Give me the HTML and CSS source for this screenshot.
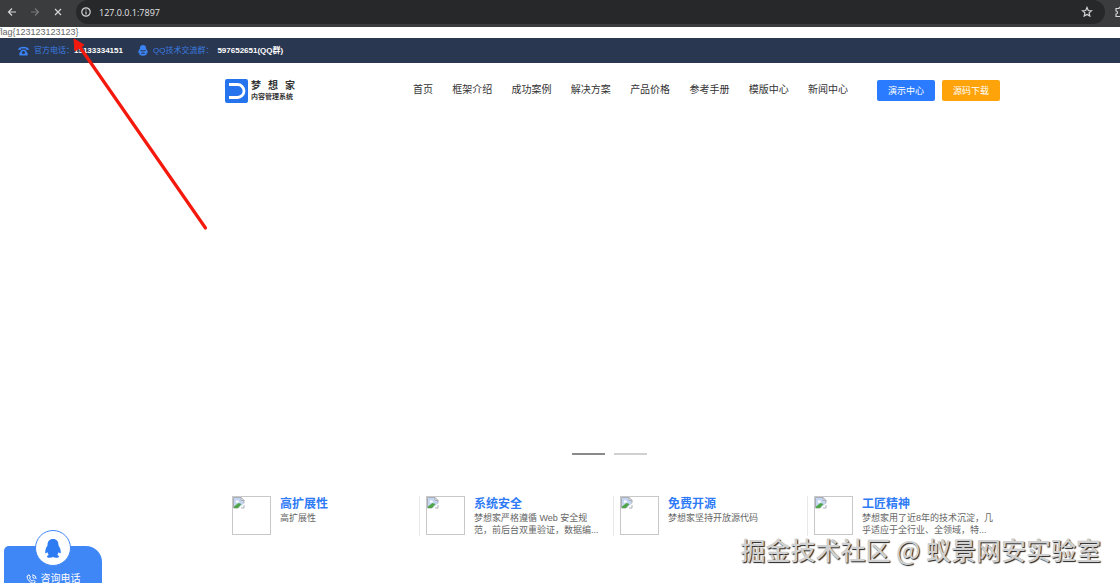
FILE: index.html
```
<!DOCTYPE html>
<html lang="zh-CN">
<head>
    <meta charset="UTF-8">
    <meta name="viewport" content="width=device-width, initial-scale=1.0">
    <title>127.0.0.1:7897</title>
    <link rel="stylesheet" href="styles.css">
</head>
<body>
    <div class="browser">
        <button class="tool" aria-label="后退">
            <svg width="10" height="10" viewBox="0 0 10 10"><path d="M9 5H1.500M5 1.500L1.500 5L5 8.500" /></svg>
        </button>
        <button class="tool dim" aria-label="前进">
            <svg width="10" height="10" viewBox="0 0 10 10"><path d="M1 5h7.500M5 1.500L8.500 5L5 8.500" /></svg>
        </button>
        <button class="tool" aria-label="停止">
            <svg width="10" height="10" viewBox="0 0 10 10"><path d="M2 2l6 6M8 2l-6 6" /></svg>
        </button>
        <div class="address">
            <svg width="10" height="10" viewBox="0 0 10 10"><circle cx="5" cy="5" r="4.200" /><path d="M5 4.500v3M5 2.500v1" /></svg>
            <input class="url" type="text" value="127.0.0.1:7897" aria-label="地址">
            <button class="star" aria-label="收藏">
                <svg width="12" height="12" viewBox="0 0 12 12"><path d="M6 1.500l1.300 3 3.200.3-2.400 2.100.7 3.200L6 8.400l-2.800 1.700.7-3.200L1.500 4.800l3.200-.3z" /></svg>
            </button>
        </div>
        <button class="tool ext" aria-label="扩展程序">
            <svg width="12" height="12" viewBox="0 0 12 12"><path d="M1 2.500h3a1.500 1.500 0 0 1 3 0h3v8H1V8a1.500 1.500 0 0 0 0-3z" /></svg>
        </button>
    </div>

    <div class="flag">flag{123123123123}</div>

    <div class="topbar">
        <svg class="icon-phone" width="11" height="10" viewBox="0 0 12 10">
            <path d="M0 3.500C.5-.8 11.500-.8 12 3.500L9.200 4 8.500 2.400h-5L2.800 4z" />
            <path d="M4 3.500h4l2.500 4V10h-9V7.500z" />
            <circle class="hole" cx="6" cy="6.600" r="1.700" />
        </svg>
        <span class="label">官方电话：</span>
        <b class="value">15133334151</b>
        <svg class="icon-qq" width="10" height="11" viewBox="0 0 10 11">
            <path d="M5 0c2.200 0 3.200 1.600 3.200 4C9.500 5.500 10 7 9.500 8.200l-.9-.5c.6 2-.6 3-3.600 3s-4.200-1-3.600-3l-.9.5C0 7 .5 5.500 1.800 4 1.800 1.600 2.800 0 5 0z" />
            <path class="hole" d="M2.500 4.800q2.500 1.500 5 0v1q-2.500 1.300-5 0zM3.300 7.800h3.400v1H3.300z" />
        </svg>
        <span class="label">QQ技术交流群：</span>
        <b class="value">597652651(QQ群)</b>
    </div>

    <header class="header">
        <a class="logo" href="#">
            <svg width="23" height="24" viewBox="0 0 23 24">
                <rect width="23" height="24" rx="2" fill="#2574ee" />
                <path d="M4 5.500h8.500a6.500 6.500 0 0 1 0 13H4" fill="none" stroke="#fff" stroke-width="2.800" />
            </svg>
            <span class="logo-text">
                <span class="logo-name"><i>梦</i><i>想</i><i>家</i></span>
                <span class="logo-sub">内容管理系统</span>
            </span>
        </a>
        <nav class="nav">
            <a href="#">首页</a>
            <a href="#">框架介绍</a>
            <a href="#">成功案例</a>
            <a href="#">解决方案</a>
            <a href="#">产品价格</a>
            <a href="#">参考手册</a>
            <a href="#">模版中心</a>
            <a href="#">新闻中心</a>
        </nav>
        <button class="btn">演示中心</button>
        <button class="btn orange">源码下载</button>
    </header>

    <main>
        <div class="banner">
            <button class="dot active" aria-label="1"></button>
            <button class="dot" aria-label="2"></button>
        </div>

        <!-- one broken-image glyph shared by the four cards -->
        <svg class="defs" width="0" height="0">
            <symbol id="broken" viewBox="0 0 12 12">
                <path d="M.5.5h7.500l3 3V11H.5z" fill="#c6d6f2" stroke="#a9adb5" />
                <path d="M8 .5v3h3z" fill="#fff" stroke="#a9adb5" />
                <path d="M3 4.500a1 1 0 0 1 2-.5 1 1 0 0 1 1 1.500H2.500z" fill="#fff" />
                <path d="M1 11V9.500L5.500 6l3 1L5 11z" fill="#4fa548" />
                <path d="M4.500 12L12 5.500V12z" fill="#fff" />
                <path d="M8 11h3V8" fill="none" stroke="#a9adb5" />
            </symbol>
        </svg>

        <div class="features">
            <div class="feature">
                <div class="thumb"><svg width="12" height="12"><use href="#broken" /></svg></div>
                <div class="info">
                    <h3>高扩展性</h3>
                    <p>高扩展性</p>
                </div>
            </div>
            <div class="feature">
                <div class="thumb"><svg width="12" height="12"><use href="#broken" /></svg></div>
                <div class="info">
                    <h3>系统安全</h3>
                    <p>梦想家严格遵循 Web 安全规<br>范，前后台双重验证，数据编...</p>
                </div>
            </div>
            <div class="feature">
                <div class="thumb"><svg width="12" height="12"><use href="#broken" /></svg></div>
                <div class="info">
                    <h3>免费开源</h3>
                    <p>梦想家坚持开放源代码</p>
                </div>
            </div>
            <div class="feature">
                <div class="thumb"><svg width="12" height="12"><use href="#broken" /></svg></div>
                <div class="info">
                    <h3>工匠精神</h3>
                    <p>梦想家用了近8年的技术沉淀，几<br>乎适应于全行业、全领域，特...</p>
                </div>
            </div>
        </div>
    </main>

    <div class="service">
        <div class="avatar">
            <svg width="16" height="19" viewBox="0 0 16 19">
                <path d="M8 0c3.800 0 5.600 2.600 5.500 6.500C15 8.800 16 11 15.700 14c-.5.700-1.200.2-2-1-.3 1.300-.8 2.200-1.500 3 1.500.5 2 1.200 1.600 2.200-1.800.9-4.300.8-5.800-.2-1.500 1-4 1.100-5.800.2-.4-1 .1-1.700 1.600-2.200-.7-.8-1.200-1.700-1.500-3-.8 1.200-1.500 1.700-2 1C0 11 1 8.800 2.500 6.500 2.400 2.600 4.200 0 8 0z" fill="#2d7cf2" />
            </svg>
        </div>
        <a class="call" href="#">
            <svg width="11" height="10" viewBox="0 0 11 10">
                <path d="M3 .8L1.200 2c-.6 3 3.300 7.500 6.800 7.200l1.500-1.500-2.200-1.600-1.200 1C4.800 6.500 4 5.300 3.500 4l1-1z" />
                <path d="M6 2.800q2 .2 2.200 2.200M6 .8q4 .2 4.200 4.200" />
            </svg>
            咨询电话
        </a>
    </div>

    <svg class="arrow" width="150" height="200" viewBox="0 0 150 200">
        <path d="M13 6L141.500 191" stroke="#f4190c" stroke-width="3.200" stroke-linecap="round" />
        <path d="M10 2L20 8L11 14Z" fill="#f4190c" stroke="#f4190c" stroke-linejoin="round" />
    </svg>
    <div class="watermark">掘金技术社区 @ 蚁景网安实验室</div>
</body>
</html>
```
FILE: styles.css
```
* {
    box-sizing: border-box;
}
body {
    margin: 0;
    min-height: 100vh;
    overflow: hidden;
    position: relative;
    background: #fff;
    color: #333;
    font-family: "Liberation Sans", "Noto Sans CJK SC", sans-serif;
    font-size: 10px;
}
a {
    color: inherit;
    text-decoration: none;
}
button {
    border: 0;
    padding: 0;
    background: none;
    font-family: inherit;
}
svg {
    display: block;
    flex-shrink: 0;
}

/* browser bar */
.browser {
    display: flex;
    align-items: center;
    height: 27px;
    padding: 0 0 3px 7px;
    gap: 13px;
    overflow: hidden;
    background: #3b3c3d;
}
.tool svg,
.address svg {
    fill: none;
    stroke: #d5d5d5;
    stroke-width: 1.2;
}
.dim {
    opacity: 0.4;
}
.ext {
    width: 5px;
}
.address {
    flex: 1;
    display: flex;
    align-items: center;
    gap: 8px;
    height: 24px;
    margin-right: -3px;
    padding: 0 12px 0 5px;
    border-radius: 12px;
    background: #27282a;
}
.url {
    flex: 1;
    border: 0;
    padding: 0;
    outline: 0;
    background: none;
    color: #e6e6e6;
    font-family: "Open Sans", sans-serif;
    font-size: 9px;
}

.flag {
    height: 11px;
    margin-left: -2px;
    line-height: 11px;
    font-size: 9px;
    color: #666;
}

.topbar {
    display: flex;
    align-items: center;
    height: 25px;
    padding-left: 18px;
    background: #2a3750;
    font-size: 8px;
    line-height: 12px;
}
.topbar svg {
    fill: #3b82f3;
}
.topbar .hole {
    fill: #2a3750;
}
.label {
    margin-left: 5px;
    color: #3b7de0;
}
.value {
    color: #fff;
}
.icon-qq {
    margin-left: 15px;
}
.icon-qq ~ .value {
    margin-left: 4px;
}

.header {
    display: flex;
    align-items: center;
    height: 54px;
    padding: 0 120px 0 225px;
}
.logo {
    display: flex;
    align-items: center;
    gap: 3px;
    padding-top: 1px;
}
.logo-text {
    display: flex;
    flex-direction: column;
    width: 44px;
    font-weight: bold;
}
.logo-name {
    display: flex;
    justify-content: space-between;
    font-size: 10px;
    line-height: 12px;
}
.logo-name i {
    font-style: normal;
}
.logo-sub {
    font-size: 7px;
    line-height: 10px;
    white-space: nowrap;
}
.nav {
    flex: 1;
    display: flex;
    justify-content: space-between;
    margin: 0 29px 0 118px;
    line-height: 16px;
    white-space: nowrap;
}
.btn {
    width: 58px;
    height: 21px;
    border-radius: 2px;
    background: #2a7bff;
    color: #fff;
    font-size: 9px;
}
.btn.orange {
    margin-left: 7px;
    background: #ffa30a;
}

.banner {
    display: flex;
    justify-content: center;
    align-items: flex-end;
    gap: 9px;
    height: 338px;
    padding-left: 98px;
}
.dot {
    width: 33px;
    height: 2px;
    background: #d0d0d0;
}
.dot.active {
    background: #8a8a8a;
}

.defs {
    position: absolute;
}
.features {
    display: grid;
    grid-template-columns: repeat(4, 1fr);
    padding: 41px 119px 0 225px;
}
.feature {
    display: flex;
    gap: 9px;
    padding-left: 6px;
    border-left: 1px solid #e8e8e8;
}
.feature:first-child {
    border-color: transparent;
}
.thumb {
    flex-shrink: 0;
    width: 39px;
    height: 39px;
    border: 1px solid #c8c8c8;
}
.info h3 {
    margin: 0;
    color: #2f7bf6;
    font-size: 12px;
    line-height: 16px;
}
.info p {
    margin: 0;
    color: #666;
    font-size: 9px;
    line-height: 12px;
    white-space: nowrap;
}

/* floating contact panel */
.service {
    position: absolute;
    left: 4px;
    bottom: 0;
    width: 98px;
    height: 37px;
    border-radius: 5px 16px 0 0;
    background: #3f86f6;
}
.avatar {
    display: flex;
    align-items: center;
    justify-content: center;
    width: 36px;
    height: 36px;
    margin: -16px auto 0;
    border: 1px solid #3f86f6;
    border-radius: 50%;
    background: #fff;
}
.call {
    display: flex;
    align-items: center;
    justify-content: center;
    gap: 4px;
    margin-top: 5px;
    color: #fff;
    font-size: 10px;
    line-height: 16px;
}
.call svg {
    fill: none;
    stroke: #fff;
}

.arrow {
    position: absolute;
    left: 64px;
    top: 37px;
    fill: none;
}
.watermark {
    position: absolute;
    right: 19px;
    bottom: 20px;
    color: #d0d0d0;
    font-family: "Noto Sans CJK SC", sans-serif;
    font-size: 25px;
    font-weight: 500;
    line-height: 28px;
    text-shadow: 1px 1px 1px #222;
    white-space: nowrap;
}
```
